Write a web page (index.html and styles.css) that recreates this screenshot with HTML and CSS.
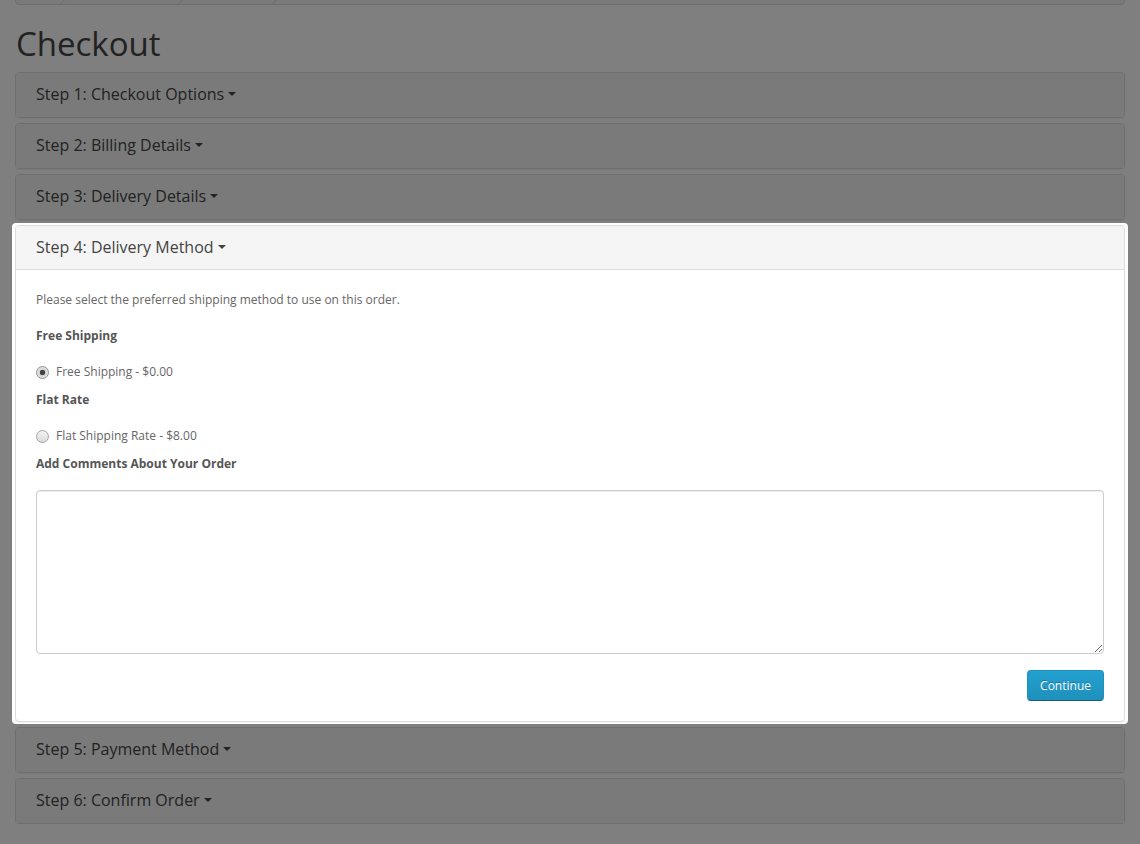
FILE: index.html
```html
<!DOCTYPE html>
<html lang="en">
<head>
  <meta charset="UTF-8" />
  <meta name="viewport" content="width=device-width, initial-scale=1.0" />
  <title>Checkout</title>
  <link rel="stylesheet" href="styles.css">
</head>
<body>
  <div class="container">
    
    <ul class="breadcrumb">
      <li class="crumb-home"></li>
      <li class="crumb-cart"></li>
      <li class="crumb-checkout"></li>
    </ul>

    <h1>Checkout</h1>

    <div class="panel-group">
      <div class="panel">
        <div class="panel-heading"><h4 class="panel-title">Step 1: Checkout Options <span class="caret"></span></h4></div>
      </div>
      <div class="panel">
        <div class="panel-heading"><h4 class="panel-title">Step 2: Billing Details <span class="caret"></span></h4></div>
      </div>
      <div class="panel">
        <div class="panel-heading"><h4 class="panel-title">Step 3: Delivery Details <span class="caret"></span></h4></div>
      </div>

      <!-- the tour highlights this step -->
      <div class="highlight">
        <div class="panel open">
          <div class="panel-heading"><h4 class="panel-title">Step 4: Delivery Method <span class="caret"></span></h4></div>
          <div class="panel-body">
            <p>Please select the preferred shipping method to use on this order.</p>
            <p class="label"><strong>Free Shipping</strong></p>
            <div class="radio">
              <label><input type="radio" name="shipping" checked> Free Shipping - $0.00</label>
            </div>
            <p class="label"><strong>Flat Rate</strong></p>
            <div class="radio">
              <label><input type="radio" name="shipping"> Flat Shipping Rate - $8.00</label>
            </div>
            <p class="label"><strong>Add Comments About Your Order</strong></p>
            <p class="comment"><textarea name="comment" rows="8"></textarea></p>
            <div class="buttons">
              <button type="button" class="btn-primary">Continue</button>
            </div>
          </div>
        </div>
      </div>

      <div class="panel">
        <div class="panel-heading"><h4 class="panel-title">Step 5: Payment Method <span class="caret"></span></h4></div>
      </div>
      <div class="panel">
        <div class="panel-heading"><h4 class="panel-title">Step 6: Confirm Order <span class="caret"></span></h4></div>
      </div>
    </div>
  </div>

  <div class="overlay"></div>
</body>
</html>
```

FILE: styles.css
```css
body {
  font-family: 'Open Sans', sans-serif;
  font-size: 12px;
  line-height: 20px;
  color: #666;
  background: #fff;
  margin: 0;
}

.container {
  padding: 0 15px;
}

.breadcrumb {
  list-style: none;
  margin: -33px 0 20px;
  padding: 8px 0;
  height: 20px;
  border: 1px solid #ddd;
  border-radius: 4px;
  background: #f5f5f5;
  display: flex;
  overflow: hidden;
}

.breadcrumb li {
  position: relative;
  flex: none;
}

.crumb-home { width: 52px; }
.crumb-cart { width: 118px; }
.crumb-checkout { width: 94px; }

.breadcrumb li::after {
  content: '';
  position: absolute;
  top: -3px;
  right: -5px;
  width: 26px;
  height: 26px;
  border-right: 1px solid #ddd;
  border-bottom: 1px solid #ddd;
  transform: rotate(-45deg);
}

h1 {
  font-size: 33px;
  font-weight: normal;
  line-height: 36px;
  color: #444;
  margin: 21px 0 10px;
  padding-left: 1px;
}

.panel {
  background: #fff;
  border: 1px solid #ddd;
  border-radius: 4px;
  box-shadow: 0 1px 1px rgba(0,0,0,.05);
}

.panel-group > * + * { margin-top: 5px; }

.panel-heading {
  background: #f5f5f5;
  border-radius: 3px 3px 0 0;
  height: 41px;
  padding: 0 20px 2px;
  display: flex;
  align-items: center;
  border-bottom: 1px solid transparent;
}

.open .panel-heading { border-bottom-color: #ddd; }

.panel-title {
  margin: 0;
  font-size: 16px;
  font-weight: normal;
  color: #444;
  line-height: 20px;
}

.caret {
  display: inline-block;
  width: 0;
  height: 0;
  border-top: 4px solid #444;
  border-left: 4px solid transparent;
  border-right: 4px solid transparent;
  vertical-align: 4px;
}

.panel-body {
  padding: 20px;
}

.panel-body p { margin: 0 0 16px; }

.panel-body strong { color: #555; }

.radio { margin: 0 0 8px; }

.radio label {
  display: flex;
  align-items: center;
  gap: 7px;
  cursor: pointer;
}

.radio input {
  appearance: none;
  -webkit-appearance: none;
  width: 13px;
  height: 13px;
  margin: 0;
  border: 1px solid #a4a4a4;
  border-radius: 50%;
  background: linear-gradient(#f4f4f4, #dadada);
}

.radio input:checked {
  border-color: #8e8e8e;
  background: radial-gradient(circle, #444 0 2.5px, #cfcfcf 3px, #ececec 6px);
}

.panel-body .comment { margin-bottom: 16px; line-height: 0; }

textarea {
  display: block;
  width: 100%;
  box-sizing: border-box;
  height: 164px;
  border: 1px solid #ccc;
  border-radius: 4px;
  padding: 6px 12px;
  font: inherit;
  box-shadow: inset 0 1px 1px rgba(0,0,0,.075);
}

.buttons {
  display: flex;
  justify-content: flex-end;
}

.btn-primary {
  font-family: 'Open Sans', sans-serif;
  font-size: 12px;
  line-height: 17px;
  padding: 6px 12px;
  color: #fff;
  text-shadow: 0 -1px 0 rgba(0,0,0,.25);
  background: linear-gradient(#23a1d1, #1f90bb);
  border: 1px solid #1f90bb;
  border-bottom-color: #145e7a;
  border-radius: 4px;
  cursor: pointer;
}

.panel-group > .highlight {
  position: relative;
  z-index: 20;
  background: #fff;
  border-radius: 4px;
  padding: 2px 3px;
  margin: 3px -3px -2px;
}

.overlay {
  position: fixed;
  inset: 0;
  background: rgba(0,0,0,.5);
  z-index: 10;
}
```
